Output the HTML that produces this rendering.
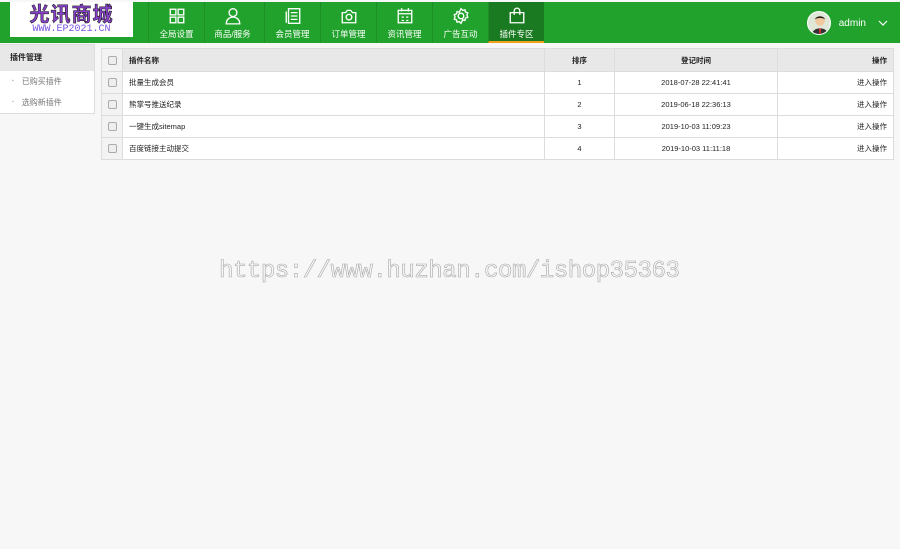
<!DOCTYPE html>
<html><head><meta charset="utf-8"><style>
*{margin:0;padding:0;box-sizing:border-box}
body{width:900px;height:549px;background:#f7f7f7;font-family:"Liberation Sans","Noto Sans CJK SC",sans-serif;position:relative;overflow:hidden;font-size:8px;color:#333}
.top{position:absolute;left:0;top:2px;width:900px;height:41px;background:#21a22c}
.logo{position:absolute;left:10px;top:2px;width:123px;height:35px;background:#fff;text-align:center}
.logo .a{font-size:20px;font-weight:bold;color:#8a3fd1;line-height:22px;letter-spacing:1px;-webkit-text-stroke:0.6px #222;font-family:"Noto Sans CJK SC",sans-serif}
.logo .b{font-family:"Liberation Mono",monospace;font-size:10px;color:#7a55e0;line-height:11px}
.nav{position:absolute;top:2px;height:41px;width:56px;color:#fff;text-align:center;border-left:1px solid #1c8f26}
.nav svg{display:block;margin:5px auto 3px;width:18px;height:18px}
.nav span{font-size:8.5px}
.nav.act{background:#1a7a21;border-bottom:2px solid #f2a01a}
.user{position:absolute;right:12px;top:11px;color:#fff;font-size:10px;display:flex;align-items:center}
.av{width:24px;height:24px;border-radius:50%;background:#dfe8d8;border:1px solid #fff;margin-right:8px;position:relative;overflow:hidden}
.side{position:absolute;left:0;top:44px;width:95px;height:70px;background:#fff;border:1px solid #ddd;border-left:none}
.side .h{background:#e8e8e8;height:26px;line-height:26px;padding-left:10px;font-weight:bold;color:#222}
.side .i{height:21px;line-height:21px;padding-left:12px;color:#777}
.side .i:before{content:"▪";font-size:5px;margin-right:8px;color:#aaa;vertical-align:middle}
table{position:absolute;left:101px;top:48px;width:793px;border-collapse:collapse;background:#fff}
td,th{border:1px solid #dcdcdc;height:22px;font-size:7.5px;color:#222}
th{background:#e8e8e8;font-weight:bold;height:23px}
td.c,th.c{width:21px;background:#f3f3f3}
.cb{display:block;margin:auto;width:9px;height:9px;border:1px solid #aaa;border-radius:2px;background:#eee}
.l{text-align:left;padding-left:6px}.m{text-align:center}.r{text-align:right;padding-right:6px}
.wm{position:absolute;left:219px;top:258px;font-family:"Liberation Mono",monospace;font-size:24px;color:transparent;-webkit-text-stroke:0.6px #a8a8a8;letter-spacing:-0.45px}
</style></head><body>
<div class="top"></div>
<div class="logo"><div class="a">光讯商城</div><div class="b">WWW.EP2021.CN</div></div>
<div class="nav" style="left:148px"><svg viewBox="0 0 16 16" fill="none" stroke="#fff" stroke-width="1.2"><rect x="2" y="2" width="5" height="5"/><rect x="9" y="2" width="5" height="5"/><rect x="2" y="9" width="5" height="5"/><rect x="9" y="9" width="5" height="5"/></svg><span>全局设置</span></div>
<div class="nav" style="left:204px"><svg viewBox="0 0 16 16" fill="none" stroke="#fff" stroke-width="1.2"><circle cx="8" cy="5" r="3.5"/><path d="M2 15c0-4 3-6 6-6s6 2 6 6z"/></svg><span>商品/服务</span></div>
<div class="nav" style="left:264px"><svg viewBox="0 0 16 16" fill="none" stroke="#fff" stroke-width="1.2"><rect x="4" y="1.5" width="10" height="13"/><path d="M2 4v10M6 5h6M6 8h6M6 11h6"/></svg><span>会员管理</span></div>
<div class="nav" style="left:320px"><svg viewBox="0 0 16 16" fill="none" stroke="#fff" stroke-width="1.2"><path d="M2 5h3l1.5-2h3L11 5h3v9H2z"/><circle cx="8" cy="9" r="2.5"/></svg><span>订单管理</span></div>
<div class="nav" style="left:376px"><svg viewBox="0 0 16 16" fill="none" stroke="#fff" stroke-width="1.2"><rect x="2" y="3" width="12" height="11"/><path d="M2 6h12M5 1v3M11 1v3M5 9h2M9 9h2M5 12h2M9 12h2"/></svg><span>资讯管理</span></div>
<div class="nav" style="left:432px"><svg viewBox="0 0 16 16" fill="none" stroke="#fff" stroke-width="1.2"><circle cx="8" cy="8" r="2.5"/><path d="M8 1.5l1.5 1.5 2-.5.5 2 2 .7-.7 2 .7 2-2 .7-.5 2-2-.5L8 14.5l-1.5-1.5-2 .5-.5-2-2-.7.7-2-.7-2 2-.7.5-2 2 .5z"/></svg><span>广告互动</span></div>
<div class="nav act" style="left:488px"><svg viewBox="0 0 16 16" fill="none" stroke="#fff" stroke-width="1.2"><path d="M2 5h12v9H2z"/><path d="M5.5 7V3.5a2.5 2.5 0 015 0V7"/></svg><span>插件专区</span></div>
<div class="user"><div class="av"><svg width="24" height="24" viewBox="0 0 22 22"><circle cx="11" cy="8" r="4.5" fill="#f0c9a0"/><path d="M6.5 7c0-4 9-4 9 0-1-2-8-2-9 0z" fill="#222"/><path d="M3 22c1-6 5-7 8-7s7 1 8 7z" fill="#333"/><path d="M10 15h2l-.5 6h-1z" fill="#d33"/></svg></div>admin<svg width="10" height="6" style="margin-left:12px" viewBox="0 0 10 6"><path d="M1 1l4 4 4-4" fill="none" stroke="#fff" stroke-width="1.2"/></svg></div>
<div class="side"><div class="h">插件管理</div><div class="i">已购买插件</div><div class="i">选购新插件</div></div>
<table>
<tr><th class="c"><span class="cb"></span></th><th class="l">插件名称</th><th class="m" style="width:70px">排序</th><th class="m" style="width:163px">登记时间</th><th class="r" style="width:116px">操作</th></tr>
<tr><td class="c"><span class="cb"></span></td><td class="l">批量生成会员</td><td class="m">1</td><td class="m">2018-07-28 22:41:41</td><td class="r">进入操作</td></tr>
<tr><td class="c"><span class="cb"></span></td><td class="l">熊掌号推送纪录</td><td class="m">2</td><td class="m">2019-06-18 22:36:13</td><td class="r">进入操作</td></tr>
<tr><td class="c"><span class="cb"></span></td><td class="l">一键生成sitemap</td><td class="m">3</td><td class="m">2019-10-03 11:09:23</td><td class="r">进入操作</td></tr>
<tr><td class="c"><span class="cb"></span></td><td class="l">百度链接主动提交</td><td class="m">4</td><td class="m">2019-10-03 11:11:18</td><td class="r">进入操作</td></tr>
</table>
<div class="wm">https://www.huzhan.com/ishop35363</div>
</body></html>
